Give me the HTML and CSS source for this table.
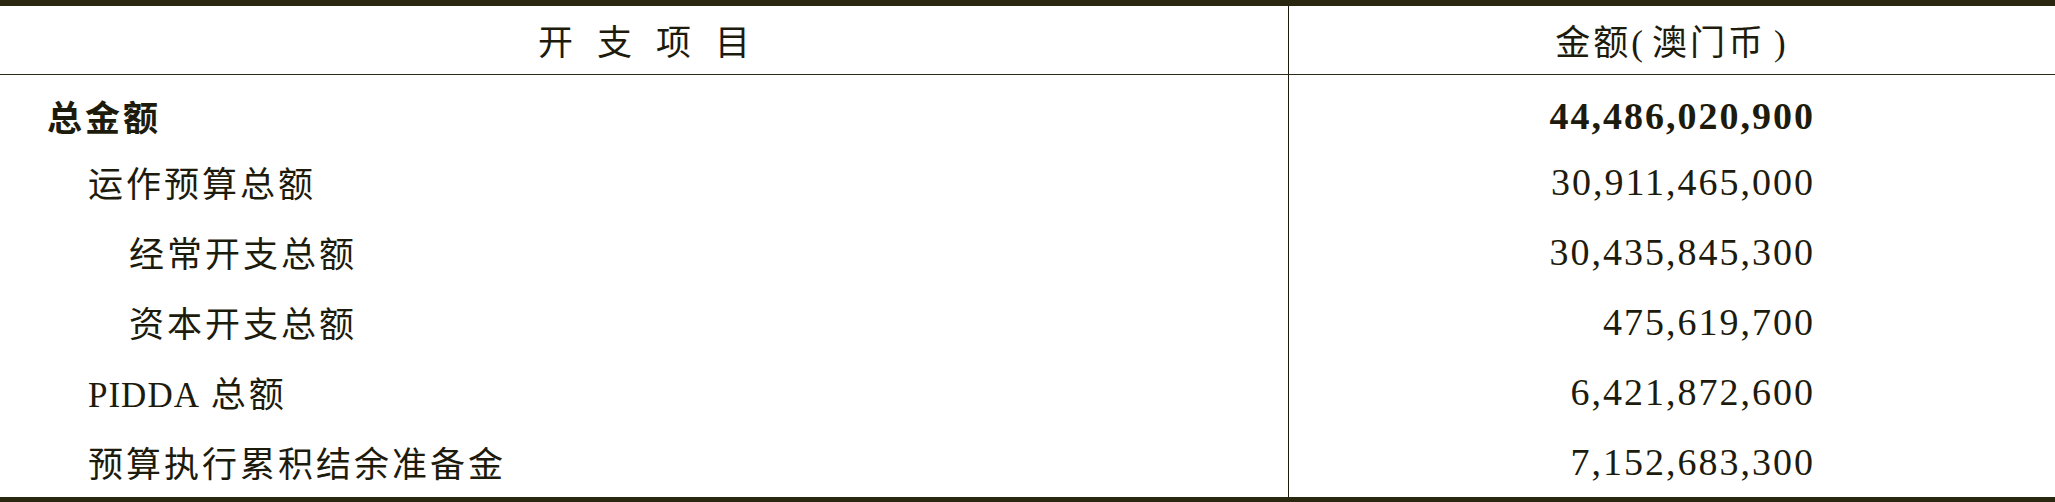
FILE: index.html
```html
<!DOCTYPE html>
<html lang="zh-CN">
<head>
  <meta charset="UTF-8" />
  <title>开支项目</title>
  <link rel="stylesheet" href="styles.css">
</head>
<body>
  <table class="budget">
    <thead>
      <tr>
        <th class="item-head">开支项目</th>
        <th class="amount-head">金额<span class="paren-open">(</span>澳门币<span class="paren-close">)</span></th>
      </tr>
    </thead>
    <tbody>
      <tr class="first">
        <td class="item level-0 strong">总金额</td>
        <td class="amount strong">44,486,020,900</td>
      </tr>
      <tr>
        <td class="item level-1">运作预算总额</td>
        <td class="amount">30,911,465,000</td>
      </tr>
      <tr>
        <td class="item level-2">经常开支总额</td>
        <td class="amount">30,435,845,300</td>
      </tr>
      <tr>
        <td class="item level-2">资本开支总额</td>
        <td class="amount">475,619,700</td>
      </tr>
      <tr>
        <td class="item level-1"><span class="latin">PIDDA</span> 总额</td>
        <td class="amount">6,421,872,600</td>
      </tr>
      <tr>
        <td class="item level-1">预算执行累积结余准备金</td>
        <td class="amount">7,152,683,300</td>
      </tr>
    </tbody>
  </table>
</body>
</html>
```

FILE: styles.css
```css
body {
  margin: 0;
  background: #fff;
}

.budget {
  width: 2055px;
  border-collapse: separate;
  border-spacing: 0;
  border-top: 6px solid #29270f;
  border-bottom: 6px solid #29270f;
  font-family: "Noto Sans CJK SC", sans-serif;
  color: #1d1b0c;
  table-layout: fixed;
}

.budget th {
  height: 68px;
  padding: 0;
  font-size: 35px;
  font-weight: normal;
  line-height: 66px;
  text-align: center;
  border-bottom: 1px solid #2c2a18;
}

.item-head {
  width: 1289px;
  border-right: 1px solid #1d1b0c;
  letter-spacing: 24px;
  padding-left: 24px !important;
  box-sizing: border-box;
}

.amount-head {
  letter-spacing: 3px;
}

.paren-open,
.paren-close {
  font-family: "Liberation Serif", serif;
  line-height: 1;
}

.paren-open {
  padding-right: 6px;
}

.paren-close {
  padding-left: 8px;
}

.budget td {
  height: 70px;
  padding: 0;
  line-height: 70px;
}

.budget tr.first td {
  height: 72px;
  padding-top: 10px;
  line-height: 62px;
  box-sizing: border-box;
}

.item {
  border-right: 1px solid #1d1b0c;
  font-size: 35px;
  letter-spacing: 3px;
}

.level-0 { padding-left: 47px !important; }
.level-1 { padding-left: 88px !important; }
.level-2 { padding-left: 129px !important; }

.latin {
  font-family: "Liberation Serif", serif;
  letter-spacing: 1px;
  line-height: 1;
}

.amount {
  font-family: "Liberation Serif", serif;
  font-size: 38px;
  letter-spacing: 2px;
  text-align: right;
  padding-right: 240px !important;
}

.strong {
  font-weight: bold;
}
```
